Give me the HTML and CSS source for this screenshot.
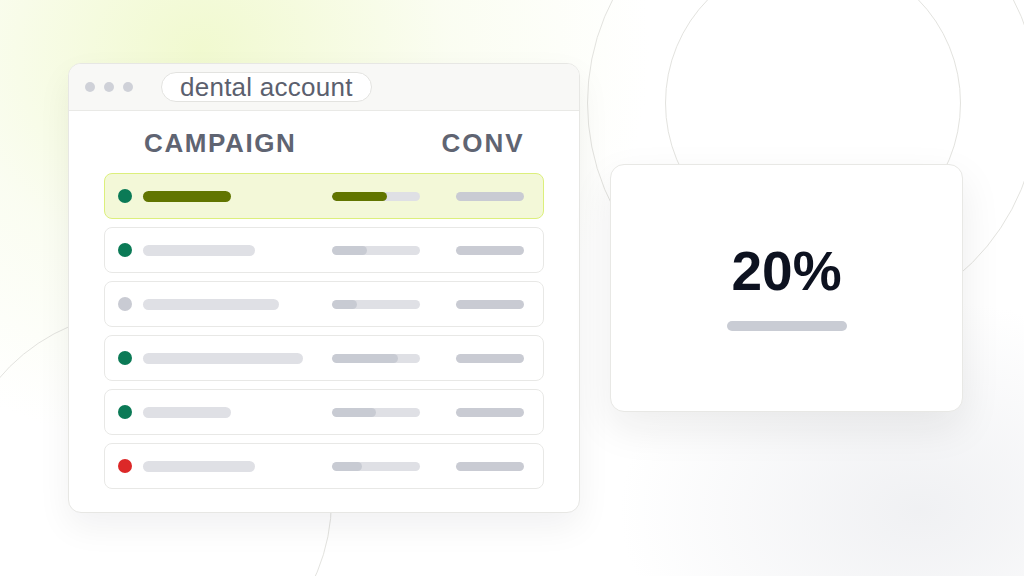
FILE: index.html
```html
<!DOCTYPE html>
<html>
<head>
<meta charset="utf-8">
<link rel="stylesheet" href="styles.css">
</head>
<body>
<div class="stage">
  <div class="glow-a"></div>
  <div class="glow-b"></div>
  <div class="ring ring-outer"></div>
  <div class="ring ring-inner"></div>
  <div class="ring ring-left"></div>

  <div class="scene">
    <div class="window">
      <div class="titlebar">
        <div class="dots"><span></span><span></span><span></span></div>
        <div class="pill">dental account</div>
      </div>
      <div class="content">
        <div class="cols">
          <span>CAMPAIGN</span>
          <span>CONV</span>
        </div>
        <div class="rows">
          <div class="row active">
            <span class="dot green"></span>
            <div class="name"><span class="bar hl" style="width:88px"></span></div>
            <div class="track"><span class="fill hl" style="width:55px"></span></div>
            <span class="conv"></span>
          </div>
          <div class="row">
            <span class="dot green"></span>
            <div class="name"><span class="bar" style="width:112px"></span></div>
            <div class="track"><span class="fill" style="width:35px"></span></div>
            <span class="conv"></span>
          </div>
          <div class="row">
            <span class="dot grey"></span>
            <div class="name"><span class="bar" style="width:136px"></span></div>
            <div class="track"><span class="fill" style="width:25px"></span></div>
            <span class="conv"></span>
          </div>
          <div class="row">
            <span class="dot green"></span>
            <div class="name"><span class="bar" style="width:160px"></span></div>
            <div class="track"><span class="fill" style="width:66px"></span></div>
            <span class="conv"></span>
          </div>
          <div class="row">
            <span class="dot green"></span>
            <div class="name"><span class="bar" style="width:88px"></span></div>
            <div class="track"><span class="fill" style="width:44px"></span></div>
            <span class="conv"></span>
          </div>
          <div class="row">
            <span class="dot red"></span>
            <div class="name"><span class="bar" style="width:112px"></span></div>
            <div class="track"><span class="fill" style="width:30px"></span></div>
            <span class="conv"></span>
          </div>
        </div>
      </div>
    </div>

    <div class="card">
      <div class="big">20%</div>
      <span class="card-bar"></span>
    </div>
  </div>
</div>
</body>
</html>
```

FILE: styles.css
```css
* { box-sizing: border-box; }
html, body { margin: 0; padding: 0; }
body {
  width: 1024px;
  height: 576px;
  overflow: hidden;
  background: #ffffff;
  font-family: "Liberation Sans", Arial, sans-serif;
}
.stage {
  position: relative;
  width: 1024px;
  height: 576px;
  overflow: hidden;
}
.glow-a {
  position: absolute;
  left: -250px;
  top: -350px;
  width: 900px;
  height: 800px;
  border-radius: 50%;
  background: radial-gradient(closest-side, rgba(240, 249, 205, 0.95), rgba(246, 251, 228, 0.5) 55%, rgba(255,255,255,0) 100%);
}
.glow-b {
  position: absolute;
  left: 620px;
  top: 300px;
  width: 600px;
  height: 420px;
  border-radius: 50%;
  background: radial-gradient(closest-side, rgba(236, 237, 240, 0.8), rgba(255,255,255,0) 100%);
}
.ring {
  position: absolute;
  border: 1.5px solid #e3e3df;
  border-radius: 50%;
}
.ring-outer { left: 587px; top: -123px; width: 452px; height: 452px; }
.ring-inner { left: 665px; top: -45px; width: 296px; height: 296px; }
.ring-left { left: -46px; top: 311px; width: 378px; height: 378px; }

.scene {
  position: relative;
  display: flex;
  align-items: flex-start;
  gap: 30px;
  padding: 63px 0 0 68px;
}

.window {
  width: 512px;
  height: 450px;
  background: #ffffff;
  border: 1px solid #e7e7e4;
  border-radius: 13px;
  overflow: hidden;
  box-shadow: 0 14px 34px rgba(20, 20, 30, 0.06);
}
.titlebar {
  height: 47px;
  background: #f8f8f6;
  border-bottom: 1px solid #e9e9e6;
  display: flex;
  align-items: center;
  padding-left: 16px;
  gap: 28px;
}
.dots { display: flex; gap: 9px; }
.dots span {
  width: 10px;
  height: 10px;
  border-radius: 50%;
  background: #cfd1d8;
}
.pill {
  height: 30px;
  padding: 0 18px 0 18px;
  border: 1px solid #e3e3e0;
  border-radius: 15px;
  background: #ffffff;
  color: #5b606e;
  font-size: 26px;
  line-height: 28px;
  letter-spacing: 0.25px;
  display: flex;
  align-items: center;
}
.content { padding: 17.5px 35px 0 35px; }
.cols {
  display: flex;
  justify-content: space-between;
  padding: 0 21px 0 40px;
  font-size: 26px;
  font-weight: 700;
  letter-spacing: 1.6px;
  color: #5f6472;
  line-height: 29px;
  height: 44.5px;
}
.cols span:last-child { margin-right: -1.6px; letter-spacing: 2px; }
.rows { display: flex; flex-direction: column; gap: 8px; }
.row {
  height: 46px;
  border: 1px solid #e8e8e6;
  border-radius: 8px;
  display: flex;
  align-items: center;
  padding: 0 19px 0 13px;
  background: #ffffff;
}
.row.active {
  background: #f3f8d8;
  border-color: #dcef7c;
}
.dot {
  width: 14px;
  height: 14px;
  border-radius: 50%;
  flex: none;
  margin-right: 11px;
}
.dot.green { background: #0b7a56; }
.dot.grey { background: #c9cbd3; }
.dot.red { background: #dc2828; }
.name { flex: 1; display: flex; }
.bar {
  display: block;
  height: 11px;
  border-radius: 6px;
  background: #dfe0e5;
}
.bar.hl { background: #617500; }
.track {
  width: 88px;
  height: 9px;
  border-radius: 5px;
  background: #dfe0e5;
  margin-right: 36px;
  display: flex;
  overflow: hidden;
}
.fill {
  display: block;
  height: 100%;
  border-radius: 5px;
  background: #c8cbd3;
}
.fill.hl { background: #617500; }
.conv {
  display: block;
  width: 68px;
  height: 9px;
  border-radius: 5px;
  background: #c9cbd3;
}

.card {
  margin-top: 101px;
  width: 353px;
  height: 248px;
  background: #ffffff;
  border: 1px solid #e8e8e5;
  border-radius: 14px;
  box-shadow: 0 16px 40px rgba(20, 20, 30, 0.08);
  display: flex;
  flex-direction: column;
  align-items: center;
  padding-top: 74.5px;
}
.big {
  font-size: 55px;
  font-weight: 700;
  color: #0d1220;
  line-height: 63px;
}
.card-bar {
  display: block;
  margin-top: 18.5px;
  width: 120px;
  height: 10px;
  border-radius: 5px;
  background: #c9ccd4;
}
```
